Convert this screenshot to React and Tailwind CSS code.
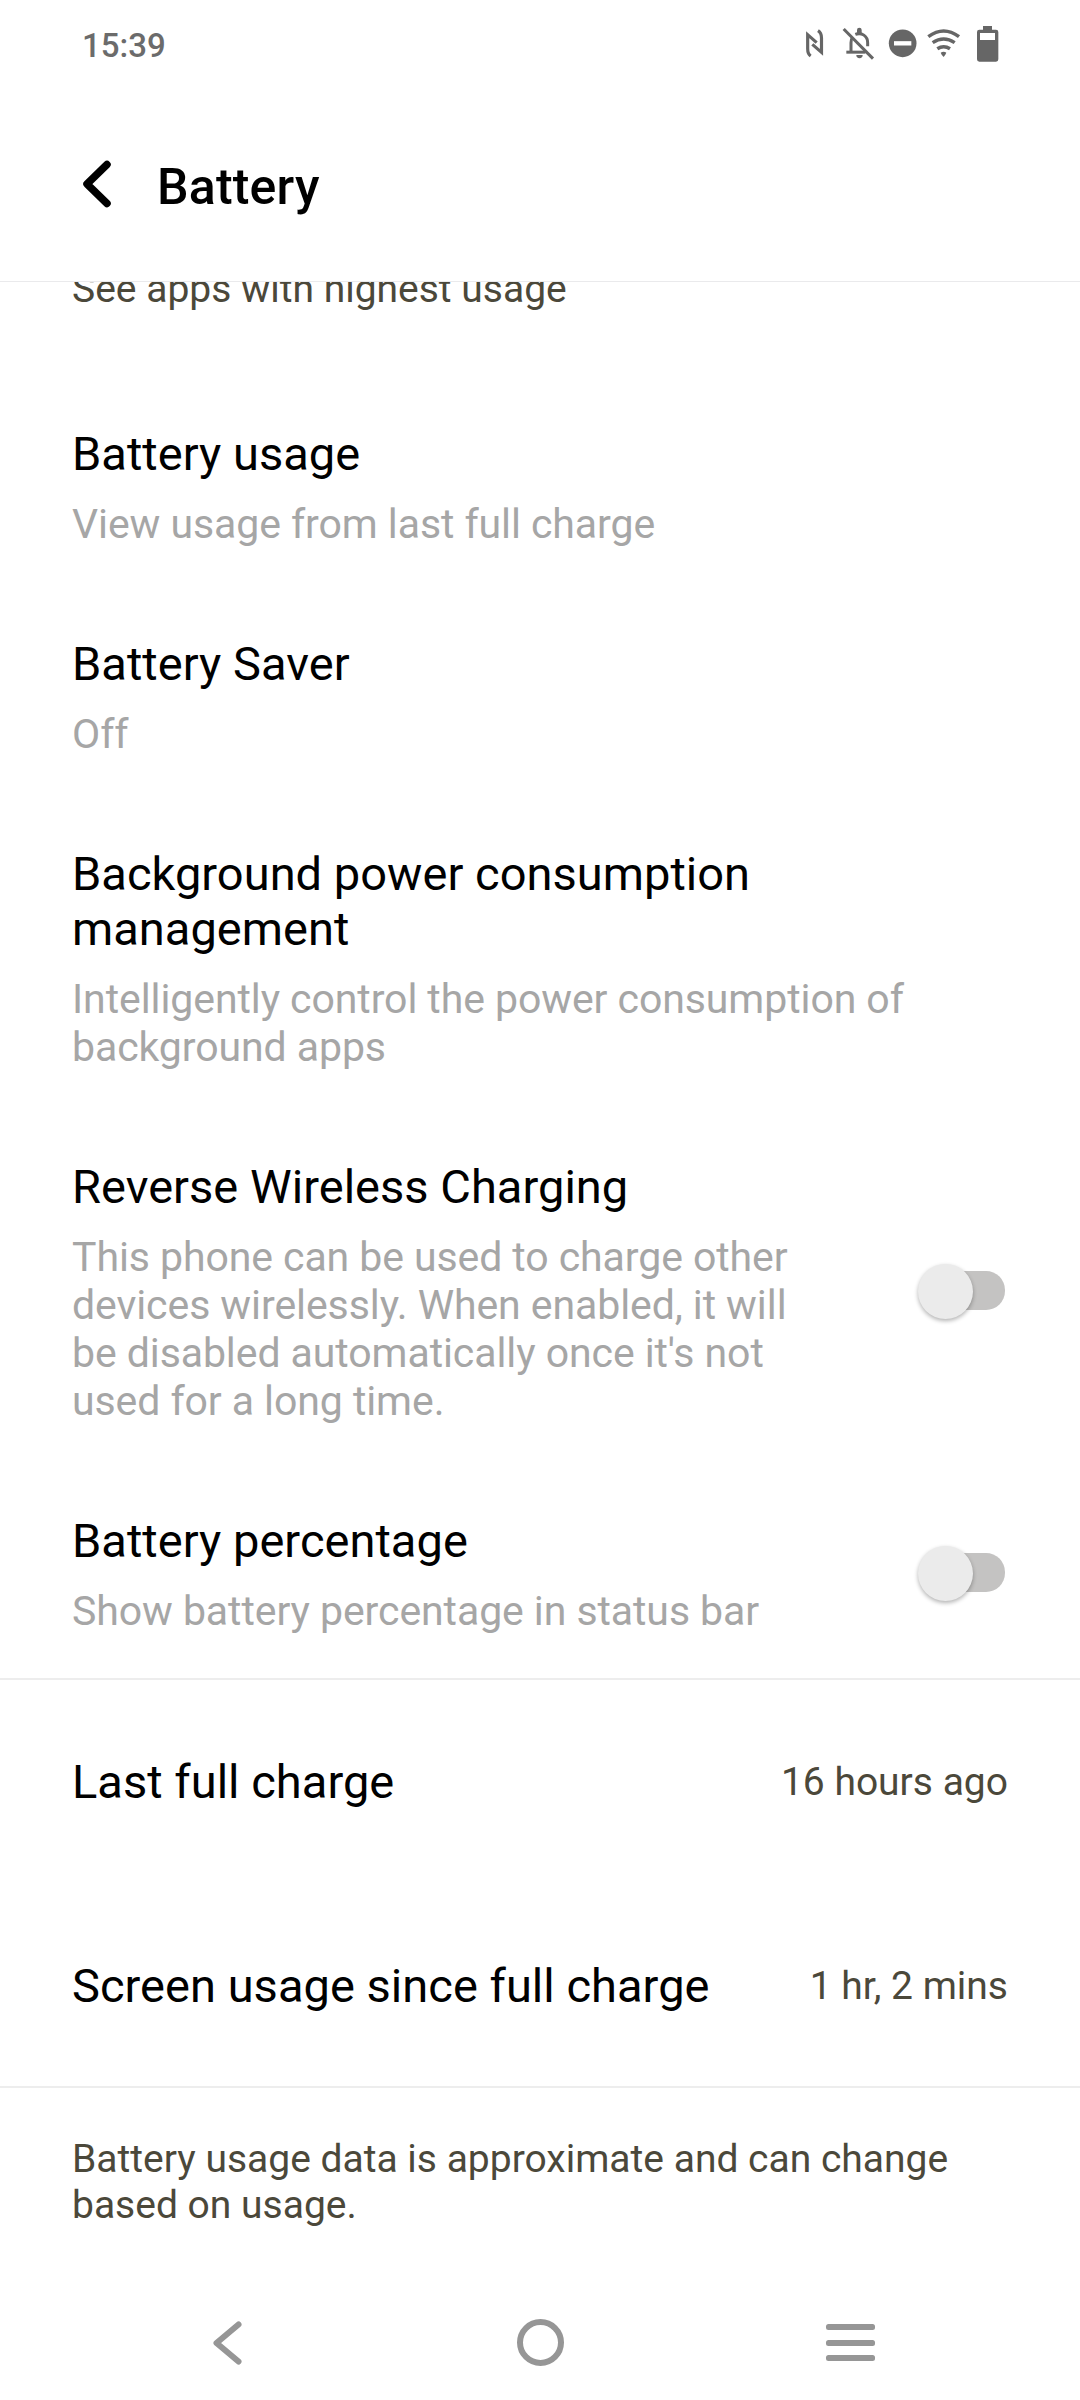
const titleText = "text-[47px] leading-[55px] tracking-[0.03px] text-black";
const subText = "mt-[19px] text-[41px] leading-[48px] tracking-[-0.08px] text-[#a6a6a6]";
const noteText = "text-[39px] leading-[46px] text-[#4b483a]";

function StatusIcons() {
  return (
    <div className="flex items-center text-[#666666]">
      <svg className="w-[36px] h-[40px]" viewBox="66 42 108 120" fill="none" stroke="currentColor" strokeWidth="9.500">
        <path d="M92 138C85 133 83 127 83 116V74L110 98" />
        <path d="M114 62C122 67 124.500 73 124.500 84V127L97 103" />
      </svg>
      <svg className="w-[40px] h-[40px]" viewBox="174 42 120 120" fill="none" stroke="currentColor" strokeWidth="9">
        <path d="M191 57L279 146" />
        <path d="M213 127V98C213 92 214 87 217 83" />
        <path d="M199 126.500H256" />
        <path d="M226 73C245 66 263 78 263 98V109" />
        <path d="M231 70V60a7 7 0 0 1 14 0V70Z" fill="currentColor" stroke="none" />
        <path d="M229 135H248a9.500 9.500 0 0 1-19 0Z" fill="currentColor" stroke="none" />
      </svg>
      <svg className="w-[46px] h-[40px]" viewBox="294 42 138 120">
        <circle cx="368" cy="100" r="41.500" fill="currentColor" />
        <rect x="342" y="93.500" width="52" height="13" fill="white" />
      </svg>
      <svg className="w-[40px] h-[40px]" viewBox="432 42 120 120" fill="none" stroke="currentColor" strokeWidth="10.500">
        <path d="M445 80Q491 46 537 80" />
        <path d="M458 98Q491 76 524 98" />
        <path d="M472 116Q491 104 510 116" />
        <path d="M482 128Q491 122 499 128L496 134L491 141L485 134Z" fill="currentColor" stroke="none" />
      </svg>
      <svg className="w-[40px] h-[40px]" viewBox="552 42 120 120">
        <path fillRule="evenodd" fill="currentColor" d="M609 48H636V59H648Q655 59 655 66V148Q655 155 648 155H598Q591 155 591 148V66Q591 59 598 59H609ZM600 69V90H645V69Z" />
      </svg>
    </div>
  );
}

function Switch() {
  return (
    <div className="relative w-[88px] h-[55px] mb-[3px] shrink-0">
      <div className="absolute right-0 top-[8px] w-[74px] h-[39px] rounded-[19px] bg-[#c4c3c2]" />
      <div className="absolute left-[0.500px] top-[0.500px] size-[55px] rounded-full bg-[#ebebeb] shadow-[0_2px_4px_rgba(0,0,0,0.3)]" />
    </div>
  );
}

function Item({ title, sub, toggle }) {
  return (
    <div className="flex items-center justify-between pl-[72px] pr-[75px]">
      <div className="whitespace-pre">
        <div className={titleText}>{title}</div>
        <div className={subText}>{sub}</div>
      </div>
      {toggle && <Switch />}
    </div>
  );
}

function ValueRow({ title, value }) {
  return (
    <div className="flex items-center justify-between h-[55px] pl-[72px] pr-[72px]">
      <div className={titleText}>{title}</div>
      <div className={noteText}>{value}</div>
    </div>
  );
}

export default function App() {
  return (
    <div className="w-[1080px] h-[2400px] bg-white font-['Roboto',sans-serif] flex flex-col overflow-hidden">
      <div className="h-[88px] shrink-0 flex items-center justify-between pl-[82px] pr-[76px]">
        <span className="pt-[3px] text-[33px] font-medium text-[#6b6b6b]">15:39</span>
        <StatusIcons />
      </div>
      <div className="h-[193px] shrink-0 flex items-center pl-[82px]">
        <svg className="w-[30px] h-[48px] mb-[1px]" viewBox="0 0 30 48" fill="none" stroke="black" strokeWidth="7.500" strokeLinecap="round" strokeLinejoin="round">
          <path d="M25 4.500L5 24L25 43.500" />
        </svg>
        <h1 className="ml-[45px] mt-[4px] text-[50px] leading-[60px] tracking-[0.200px] font-medium text-black">Battery</h1>
      </div>
      <div className="h-[1399px] shrink-0 overflow-hidden border-t border-b-2 border-[#ededed] border-t-[#eaeaec]">
        <div className={`${noteText} -mt-[16px] pl-[72px]`}>See apps with highest usage</div>
        <div className="mt-[114px] flex flex-col gap-[88px]">
          <Item title="Battery usage" sub="View usage from last full charge" />
          <Item title="Battery Saver" sub="Off" />
          <Item
            title={"Background power consumption\nmanagement"}
            sub={"Intelligently control the power consumption of\nbackground apps"}
          />
          <Item
            title="Reverse Wireless Charging"
            sub={"This phone can be used to charge other\ndevices wirelessly. When enabled, it will\nbe disabled automatically once it's not\nused for a long time."}
            toggle
          />
          <Item title="Battery percentage" sub="Show battery percentage in status bar" toggle />
        </div>
      </div>
      <div className="h-[408px] shrink-0 pt-[74px] flex flex-col gap-[149px] border-b-2 border-[#ededed]">
        <ValueRow title="Last full charge" value="16 hours ago" />
        <ValueRow title="Screen usage since full charge" value="1 hr, 2 mins" />
      </div>
      <div className={`${noteText} h-[197px] shrink-0 pt-[48px] pl-[72px] whitespace-pre`}>
        {"Battery usage data is approximate and can change\nbased on usage."}
      </div>
      <div className="h-[115px] shrink-0 flex items-center justify-between pl-[212px] pr-[205px] text-[#969696]">
        <svg className="w-[30px] h-[44px]" viewBox="0 0 30 44" fill="none" stroke="currentColor" strokeWidth="6" strokeLinecap="round" strokeLinejoin="round">
          <path d="M26.500 3.500L4.500 22L26.500 40.500" />
        </svg>
        <div className="size-[47px] ml-[12px] rounded-full border-[6px] border-current" />
        <div className="w-[49px] flex flex-col gap-[9.500px]">
          <div className="h-[6px] rounded-[2.500px] bg-current" />
          <div className="h-[6px] rounded-[2.500px] bg-current" />
          <div className="h-[6px] rounded-[2.500px] bg-current" />
        </div>
      </div>
    </div>
  );
}
